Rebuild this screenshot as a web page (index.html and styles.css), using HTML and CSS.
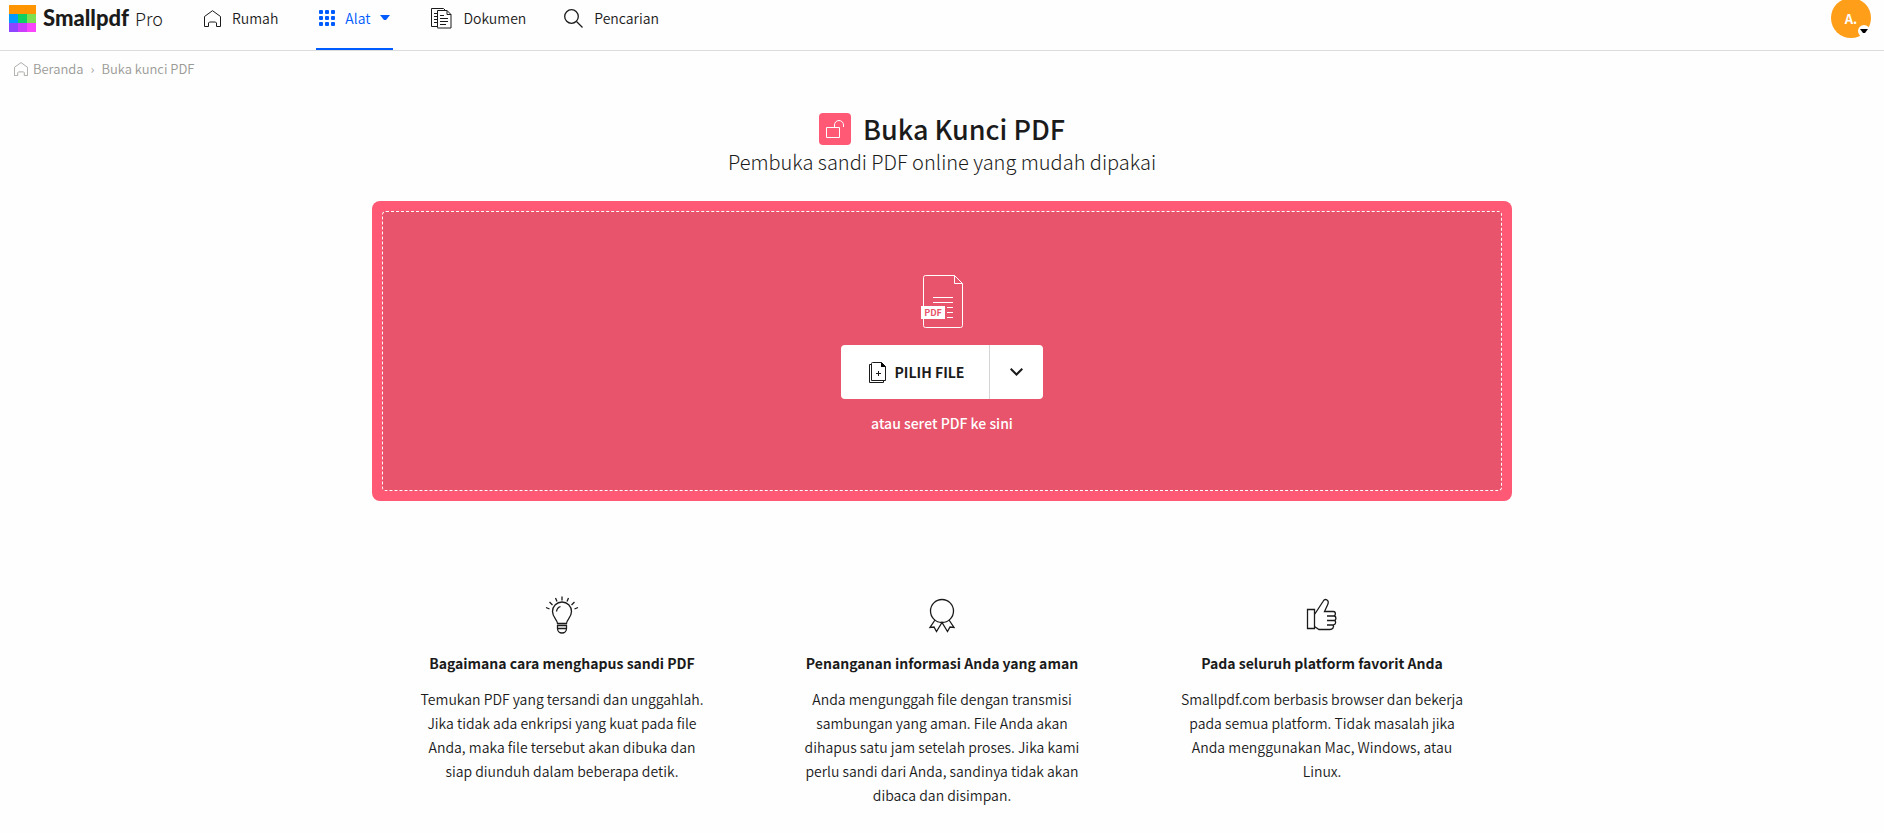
FILE: index.html
```
<!doctype html>
<html lang="id">
  <head>
    <meta charset="utf-8">
    <meta name="viewport" content="width=device-width, initial-scale=1">
    <title>Buka Kunci PDF - Smallpdf</title>
    <link rel="stylesheet" href="styles.css">
  </head>
  <body>
    <header class="topbar">
      <a class="brand" href="#">
        <svg class="logo" width="27" height="27" viewBox="0 0 27 27" aria-hidden="true" shape-rendering="crispEdges">
          <path fill="#ff9500" d="M0 0h27v9H0z"/>
          <path fill="#0099ff" d="M0 9h9v9H0z"/>
          <path fill="#0fd061" d="M9 9h9v9H9z"/>
          <path fill="#7ee04f" d="M18 9h9v9h-9z"/>
          <path fill="#8f45ff" d="M0 18h9v9H0z"/>
          <path fill="#cb3dfb" d="M9 18h9v9H9z"/>
          <path fill="#fa46fa" d="M18 18h9v9h-9z"/>
        </svg>
        <span class="brand-name">Smallpdf</span>
        <span class="brand-plan">Pro</span>
      </a>
      <nav class="menu">
        <a class="menu-item" href="#">
          <svg width="17" height="17" viewBox="0 0 17 17" aria-hidden="true"><path class="line" d="M.5 16.500V6.500L8.500.700l8 5.800v10h-4v-3.500l-1-1h-6l-1 1v3.500z"/></svg>
          Rumah
        </a>
        <a class="menu-item active" href="#">
          <svg width="16" height="16" viewBox="0 0 16 16" fill="currentColor" aria-hidden="true">
            <rect width="4" height="4" rx="1"/><rect x="6" width="4" height="4" rx="1"/><rect x="12" width="4" height="4" rx="1"/>
            <rect y="6" width="4" height="4" rx="1"/><rect x="6" y="6" width="4" height="4" rx="1"/><rect x="12" y="6" width="4" height="4" rx="1"/>
            <rect y="12" width="4" height="4" rx="1"/><rect x="6" y="12" width="4" height="4" rx="1"/><rect x="12" y="12" width="4" height="4" rx="1"/>
          </svg>
          Alat
          <svg width="10" height="6" viewBox="0 0 10 6" fill="currentColor" aria-hidden="true"><path d="M0 0h10L6 5H4z"/></svg>
        </a>
        <a class="menu-item" href="#">
          <svg width="21" height="21" viewBox="0 0 21 21" aria-hidden="true">
            <path class="line" d="M6.500 18.500h-6V.5h12l2 2M6.500 19.500v-17h9.500l4 4v13.500h-13.500zM16 2.500v4h4M3 5.500h3M3 8.500h3M3 11.500h3M3 14.500h3M9 7.500h4M9 10.500h8M9 13.500h8M9 16.500h6"/>
          </svg>
          Dokumen
        </a>
        <a class="menu-item" href="#">
          <svg width="19" height="19" viewBox="0 0 19 19" aria-hidden="true"><circle class="line bold" cx="7.500" cy="7.500" r="6.800"/><path class="line bold" d="m12.500 12.500 6 6"/></svg>
          Pencarian
        </a>
      </nav>
      <button class="avatar" type="button" aria-label="Akun">
        A.
        <span class="avatar-caret"><svg width="8" height="4" viewBox="0 0 8 4" aria-hidden="true"><path d="M0 0h8L5 4H3z"/></svg></span>
      </button>
    </header>

    <nav class="breadcrumb" aria-label="Breadcrumb">
      <a href="#">
        <svg width="14" height="14" viewBox="0 0 17 17" aria-hidden="true"><path class="line" d="M.5 16.500V6.500L8.500.700l8 5.800v10h-4v-3.500l-1-1h-6l-1 1v3.500z"/></svg>
        Beranda
      </a>
      <span>›</span>
      <a href="#">Buka kunci PDF</a>
    </nav>

    <main class="container">
      <div class="heading">
        <h1>
          <svg width="32" height="32" viewBox="0 0 32 32" aria-hidden="true">
            <rect width="32" height="32" rx="4" fill="#ff5975"/>
            <path fill="none" stroke="#fff" d="M7.500 14.500h13v10h-13zM15.500 14.500v-2.500a4.500 4.500 0 0 1 9 0v2"/>
          </svg>
          Buka Kunci PDF
        </h1>
        <p>Pembuka sandi PDF online yang mudah dipakai</p>
      </div>

      <section class="uploader">
        <div class="dropzone">
          <svg class="file-icon" width="43" height="53" viewBox="0 0 43 53" aria-hidden="true">
            <path fill="none" stroke="#fff" d="M2.500 31V2.500a2 2 0 0 1 2-2h29l8 8v42a2 2 0 0 1-2 2h-35a2 2 0 0 1-2-2V44M33.500.5v8h8M12 22.500h20M12 27.500h20M26 32.500h6M26 37.500h6M26 42.500h6"/>
            <rect y="31" width="24" height="13" fill="#fff"/>
            <text x="12" y="41" text-anchor="middle">PDF</text>
          </svg>
          <div class="choose">
            <button class="choose-file" type="button">
              <svg width="18" height="21" viewBox="0 0 18 21" aria-hidden="true">
                <path class="line" d="M3.500.5h9l4 4v14h-14v-17a1 1 0 0 1 1-1zM2.500 2.500h-2v18h14v-2M9.500 9v5M7 11.500h5"/>
                <path d="M12 0l5 5h-5z"/>
              </svg>
              PILIH FILE
            </button>
            <button class="choose-more" type="button" aria-label="Sumber lain">
              <svg width="13" height="8" viewBox="0 0 13 8" aria-hidden="true"><path fill="none" stroke="#1b1b1b" stroke-width="2" d="m.7.700 5.800 5.800L12.300.700"/></svg>
            </button>
          </div>
          <p class="hint">atau seret PDF ke sini</p>
        </div>
      </section>

      <section class="features">
        <article>
          <svg width="38" height="38" viewBox="0 0 38 38" aria-hidden="true">
            <path class="line bold" d="M14.500 27.500c0-4-5-6-5-12a9.500 9.500 0 0 1 19 0c0 6-5 8-5 12zM13.500 15.500a6 6 0 0 1 4-5M14 29.500h10M14 32.500h10M14.500 29v3.500a4.500 4.500 0 0 0 9 0V29M19 .5v4M12.500 2l1.500 3.500M25.500 2 24 5.500M6.500 6l3 3M31.500 6l-3 3M3 11.500l3.500 1.500M35 11.500 31.500 13"/>
          </svg>
          <h2>Bagaimana cara menghapus sandi PDF</h2>
          <p>Temukan PDF yang tersandi dan unggahlah. Jika tidak ada enkripsi yang kuat pada file Anda, maka file tersebut akan dibuka dan siap diunduh dalam beberapa detik.</p>
        </article>
        <article>
          <svg width="38" height="38" viewBox="0 0 38 38" aria-hidden="true">
            <circle class="line bold" cx="19" cy="15" r="11.500"/>
            <path class="line bold" d="m12 24-5 7.500 4-.5 2.500 4.500L19 26.500l5.500 9L27 31l4 .5-5-7.500"/>
          </svg>
          <h2>Penanganan informasi Anda yang aman</h2>
          <p>Anda mengunggah file dengan transmisi sambungan yang aman. File Anda akan dihapus satu jam setelah proses. Jika kami perlu sandi dari Anda, sandinya tidak akan dibaca dan disimpan.</p>
        </article>
        <article>
          <svg width="38" height="38" viewBox="0 0 38 38" aria-hidden="true">
            <path class="line bold" d="M4.500 13.500h7v19h-7zM11.500 18.500 20 5.500c1-2 2.500-2.500 4-1.500s1.500 3 .5 5L21.500 15.500h9c2.500 0 2.500 4.500 0 4.500M24 20h7c2.500 0 2.500 4.500 0 4.500h-7M31 24.500c2.500 0 2 4.500-1 4.500h-6M30 29c1.500 2-.5 4.500-3 4.500H16l-4.500-3"/>
          </svg>
          <h2>Pada seluruh platform favorit Anda</h2>
          <p>Smallpdf.com berbasis browser dan bekerja pada semua platform. Tidak masalah jika Anda menggunakan Mac, Windows, atau Linux.</p>
        </article>
      </section>
    </main>
  </body>
</html>
```
FILE: styles.css
```
* { box-sizing: border-box; }
html, body { margin: 0; padding: 0; }
body {
  background: #fefefe;
  color: #1b1b1b;
  font-family: "Noto Sans CJK SC", "Open Sans", sans-serif;
  font-size: 14px;
  line-height: 24px;
}
a { color: inherit; text-decoration: none; }
h1, h2, p { margin: 0; }
svg { flex: none; }
.line { fill: none; stroke: currentColor; }
.bold { stroke-width: 1.3; }

/* top bar */
.topbar {
  display: flex;
  align-items: flex-start;
  height: 51px;
  padding: 0 13px 0 9px;
  border-bottom: 1px solid #dcdcdc;
}
.brand {
  display: flex;
  align-items: center;
  height: 36px;
  font-size: 18px;
}
.brand-name {
  margin: 0 6px 0 7px;
  font-family: Lato, sans-serif;
  font-size: 22px;
  font-weight: 900;
}
.brand-plan { font-weight: 300; }
.menu {
  display: flex;
  gap: 38px;
  margin-left: 41px;
}
.menu-item {
  display: flex;
  align-items: center;
  gap: 11px;
  height: 50px;
  padding: 0 0 14px;
  font-weight: 350;
}
.menu-item.active {
  gap: 10px;
  padding: 0 3px 13px;
  color: #005cff;
  border-bottom: 2px solid #005cff;
}
.avatar {
  position: relative;
  width: 40px;
  height: 40px;
  margin: -2px 0 0 auto;
  padding: 0;
  border: 0;
  border-radius: 50%;
  background: #ff9e18;
  color: #fff;
  font: 700 13px "Noto Sans CJK SC", sans-serif;
}
.avatar-caret {
  position: absolute;
  right: 1px;
  bottom: 1px;
  display: flex;
  align-items: center;
  justify-content: center;
  width: 12px;
  height: 12px;
  border-radius: 50%;
  background: #fff;
}

/* breadcrumb */
.breadcrumb {
  display: flex;
  gap: 7px;
  padding: 6px 14px;
  color: #9a9a96;
  font-size: 13px;
  font-weight: 350;
}
.breadcrumb a {
  display: flex;
  align-items: center;
  gap: 5px;
}

.container {
  max-width: 1140px;
  margin: 0 auto;
}
.heading {
  padding-top: 26px;
  text-align: center;
}
.heading h1 {
  display: flex;
  align-items: center;
  justify-content: center;
  gap: 12px;
  font-size: 27px;
  font-weight: 500;
  line-height: 32px;
}
.heading p {
  font-size: 20px;
  font-weight: 300;
  line-height: 34px;
}

/* upload box */
.uploader {
  margin-top: 22px;
  padding: 10px;
  border-radius: 8px;
  background: #ff5975;
}
.dropzone {
  display: flex;
  flex-direction: column;
  align-items: center;
  min-height: 280px;
  padding-top: 63px;
  border: 1px dashed #fff;
  border-radius: 4px;
  background: #e8546b;
}
.file-icon text {
  fill: #e8546b;
  font-size: 9px;
  font-weight: 700;
}
.choose {
  display: flex;
  height: 54px;
  margin: 17px 0 12px;
  border-radius: 4px;
  background: #fff;
}
.choose button {
  display: flex;
  align-items: center;
  gap: 8px;
  border: 0;
  background: none;
  color: inherit;
  font: 700 14px "Noto Sans CJK SC", sans-serif;
}
.choose .choose-file { padding: 0 25px 0 28px; }
.choose .choose-more {
  padding: 0 20px;
  border-left: 1px solid #d4d4d4;
}
.hint {
  color: #fff;
  font-weight: 500;
}

/* features */
.features {
  display: grid;
  grid-template-columns: repeat(3, 1fr);
  padding-top: 95px;
  text-align: center;
}
.features article { padding: 0 44px; }
.features svg {
  display: block;
  margin: 0 auto;
}
.features h2 {
  margin: 17px 0 12px;
  font-size: 14px;
  font-weight: 700;
}
.features p { font-weight: 350; }
```
